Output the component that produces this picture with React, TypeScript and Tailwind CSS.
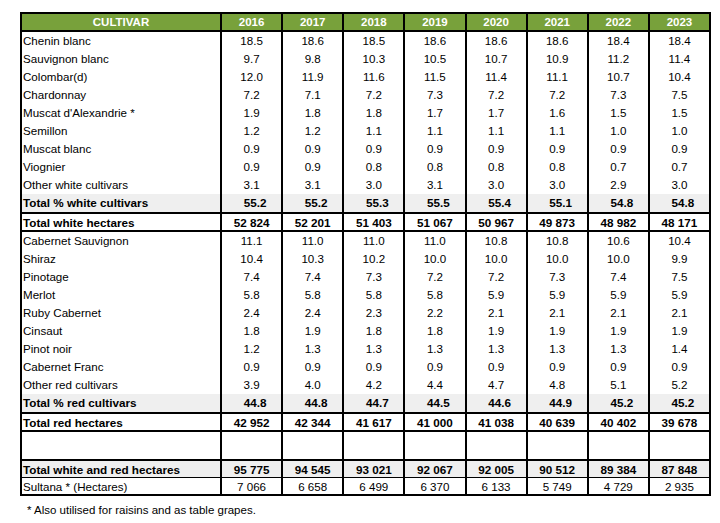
import React from "react";

type Row = { name: string; vals: string[] };

const white: Row[] = [
  { name: "Chenin blanc", vals: ["18.5", "18.6", "18.5", "18.6", "18.6", "18.6", "18.4", "18.4"] },
  { name: "Sauvignon blanc", vals: ["9.7", "9.8", "10.3", "10.5", "10.7", "10.9", "11.2", "11.4"] },
  { name: "Colombar(d)", vals: ["12.0", "11.9", "11.6", "11.5", "11.4", "11.1", "10.7", "10.4"] },
  { name: "Chardonnay", vals: ["7.2", "7.1", "7.2", "7.3", "7.2", "7.2", "7.3", "7.5"] },
  { name: "Muscat d'Alexandrie *", vals: ["1.9", "1.8", "1.8", "1.7", "1.7", "1.6", "1.5", "1.5"] },
  { name: "Semillon", vals: ["1.2", "1.2", "1.1", "1.1", "1.1", "1.1", "1.0", "1.0"] },
  { name: "Muscat blanc", vals: ["0.9", "0.9", "0.9", "0.9", "0.9", "0.9", "0.9", "0.9"] },
  { name: "Viognier", vals: ["0.9", "0.9", "0.8", "0.8", "0.8", "0.8", "0.7", "0.7"] },
  { name: "Other white cultivars", vals: ["3.1", "3.1", "3.0", "3.1", "3.0", "3.0", "2.9", "3.0"] },
];

const red: Row[] = [
  { name: "Cabernet Sauvignon", vals: ["11.1", "11.0", "11.0", "11.0", "10.8", "10.8", "10.6", "10.4"] },
  { name: "Shiraz", vals: ["10.4", "10.3", "10.2", "10.0", "10.0", "10.0", "10.0", "9.9"] },
  { name: "Pinotage", vals: ["7.4", "7.4", "7.3", "7.2", "7.2", "7.3", "7.4", "7.5"] },
  { name: "Merlot", vals: ["5.8", "5.8", "5.8", "5.8", "5.9", "5.9", "5.9", "5.9"] },
  { name: "Ruby Cabernet", vals: ["2.4", "2.4", "2.3", "2.2", "2.1", "2.1", "2.1", "2.1"] },
  { name: "Cinsaut", vals: ["1.8", "1.9", "1.8", "1.8", "1.9", "1.9", "1.9", "1.9"] },
  { name: "Pinot noir", vals: ["1.2", "1.3", "1.3", "1.3", "1.3", "1.3", "1.3", "1.4"] },
  { name: "Cabernet Franc", vals: ["0.9", "0.9", "0.9", "0.9", "0.9", "0.9", "0.9", "0.9"] },
  { name: "Other red cultivars", vals: ["3.9", "4.0", "4.2", "4.4", "4.7", "4.8", "5.1", "5.2"] },
];

const years = ["2016", "2017", "2018", "2019", "2020", "2021", "2022", "2023"];

const grid = "grid grid-cols-[198px_repeat(8,minmax(0,1fr))]";

function DataRow({
  row,
  h = "h-[18px]",
  bold = false,
  gray = false,
  shift = false,
  top = "",
}: {
  row: Row;
  h?: string;
  bold?: boolean;
  gray?: boolean;
  shift?: boolean;
  top?: string;
}) {
  return (
    <div className={`${grid} ${h} ${top} ${gray ? "bg-[#efefef]" : "bg-white"} ${bold ? "font-bold text-[11.7px]" : "text-[11.6px]"}`}>
      <div className="flex items-center pl-[1px] whitespace-nowrap">{row.name}</div>
      {row.vals.map((v, i) => (
        <div
          key={i}
          className={`flex items-center justify-center border-l-2 border-black ${shift ? "pl-[7px]" : ""}`}
        >
          {v}
        </div>
      ))}
    </div>
  );
}

export default function App() {
  return (
    <div className="w-[720px] h-[523px] bg-white text-black font-['Liberation_Sans',Arial,sans-serif] overflow-hidden">
      <div className="pt-[12px] pl-[20px]">
        <div className="w-[691px] border-2 border-black">
          <div className={`${grid} h-[18px] bg-[#78a13b] text-white font-bold text-[11.5px] border-b-2 border-black`}>
            <div className="flex items-center justify-center">CULTIVAR</div>
            {years.map((y) => (
              <div key={y} className="flex items-center justify-center border-l-2 border-black">
                {y}
              </div>
            ))}
          </div>
          {white.map((r) => (
            <DataRow key={r.name} row={r} />
          ))}
          <DataRow
            row={{ name: "Total % white cultivars", vals: ["55.2", "55.2", "55.3", "55.5", "55.4", "55.1", "54.8", "54.8"] }}
            bold
            gray
            shift
          />
          <DataRow
            row={{ name: "Total white hectares", vals: ["52 824", "52 201", "51 403", "51 067", "50 967", "49 873", "48 982", "48 171"] }}
            bold
            h="h-[20px]"
            top="border-t-2 border-b-2 border-black"
          />
          {red.map((r) => (
            <DataRow key={r.name} row={r} />
          ))}
          <DataRow
            row={{ name: "Total % red cultivars", vals: ["44.8", "44.8", "44.7", "44.5", "44.6", "44.9", "45.2", "45.2"] }}
            bold
            gray
            shift
          />
          <DataRow
            row={{ name: "Total red hectares", vals: ["42 952", "42 344", "41 617", "41 000", "41 038", "40 639", "40 402", "39 678"] }}
            bold
            h="h-[20px]"
            top="border-t-2 border-b-2 border-black"
          />
          <DataRow row={{ name: "", vals: ["", "", "", "", "", "", "", ""] }} h="h-[27px]" />
          <DataRow
            row={{ name: "Total white and red hectares", vals: ["95 775", "94 545", "93 021", "92 067", "92 005", "90 512", "89 384", "87 848"] }}
            bold
            gray
            h="h-[19px]"
            top="border-t-2 border-b border-black"
          />
          <DataRow
            row={{ name: "Sultana * (Hectares)", vals: ["7 066", "6 658", "6 499", "6 370", "6 133", "5 749", "4 729", "2 935"] }}
            h="h-[16px]"
          />
        </div>
        <div className="pl-[7px] pt-[7px] text-[11.5px] leading-[14px]">* Also utilised for raisins and as table grapes.</div>
      </div>
    </div>
  );
}
